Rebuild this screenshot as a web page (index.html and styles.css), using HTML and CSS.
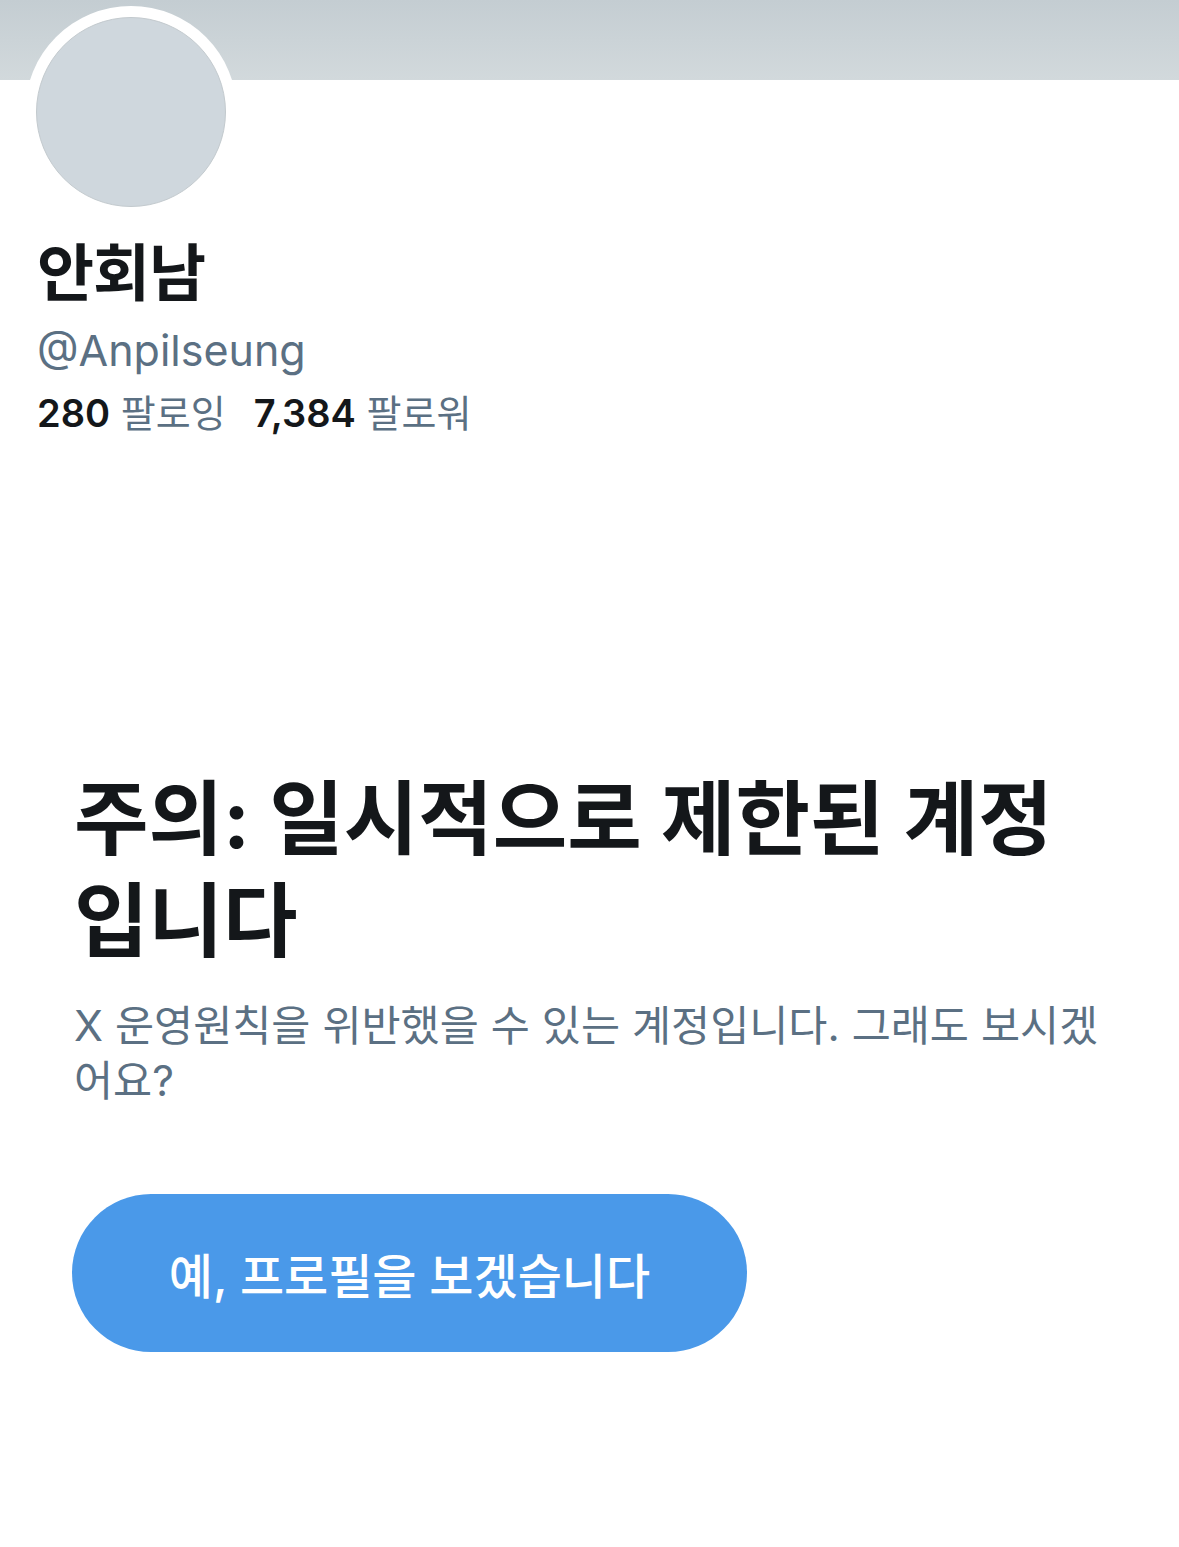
FILE: index.html
```html
<!DOCTYPE html>
<html lang="ko">
<head>
    <meta charset="UTF-8">
    <meta name="viewport" content="width=device-width, initial-scale=1.0">
    <title>안회남 (@Anpilseung)</title>
    <link rel="stylesheet" href="styles.css">
</head>
<body>
    <div class="banner"></div>
    <div class="profile">
        <div class="avatar">
            <div class="avatar-img"></div>
        </div>
        <h1 class="name">안회남</h1>
        <div class="handle">@Anpilseung</div>
        <div class="stats">
            <span class="stat"><b>280</b> 팔로잉</span>
            <span class="stat"><b>7,384</b> 팔로워</span>
        </div>
    </div>

    <div class="warning">
        <h2>주의: 일시적으로 제한된 계정입니다</h2>
        <p>X 운영원칙을 위반했을 수 있는 계정입니다. 그래도 보시겠어요?</p>
        <button class="view-btn">예, 프로필을 보겠습니다</button>
    </div>
</body>
</html>
```

FILE: styles.css
```css
* {
    margin: 0;
    padding: 0;
    box-sizing: border-box;
}

body {
    font-family: Inter, "Noto Sans CJK KR", sans-serif;
    background-color: white;
    color: #14171a;
}

.banner {
    height: 80px;
    background: linear-gradient(to bottom, #c4cdd2, #d2d9dc);
}

.profile {
    padding: 0 37px;
}

.avatar {
    width: 212px;
    height: 212px;
    margin-top: -74px;
    margin-left: -12px;
    border-radius: 50%;
    background-color: white;
    padding: 11px;
}

.avatar-img {
    width: 100%;
    height: 100%;
    border-radius: 50%;
    background-color: #cfd7dd;
    border: 1px solid #c3cace;
}

.name {
    font-size: 62px;
    font-weight: 700;
    line-height: 72px;
    margin-top: 20px;
    letter-spacing: -1px;
}

.handle {
    font-size: 43px;
    line-height: 56px;
    color: #5b7083;
    margin-top: 12px;
}

.stats {
    font-size: 38px;
    line-height: 50px;
    color: #5b7083;
    display: flex;
    gap: 28px;
    margin-top: 10px;
}

.stats b {
    color: #14171a;
    font-weight: 600;
}

.warning {
    padding: 0 74px;
    margin-top: 330px;
}

h2 {
    font-size: 81px;
    font-weight: 700;
    line-height: 102px;
}

p {
    font-size: 42.5px;
    line-height: 55px;
    color: #5b7083;
    margin-top: 26px;
}

.view-btn {
    margin-top: 86px;
    margin-left: -2px;
    width: 675px;
    height: 158px;
    border: none;
    border-radius: 79px;
    background-color: #4a99e9;
    color: white;
    font-family: inherit;
    font-size: 48px;
    font-weight: 500;
    cursor: pointer;
}
```
